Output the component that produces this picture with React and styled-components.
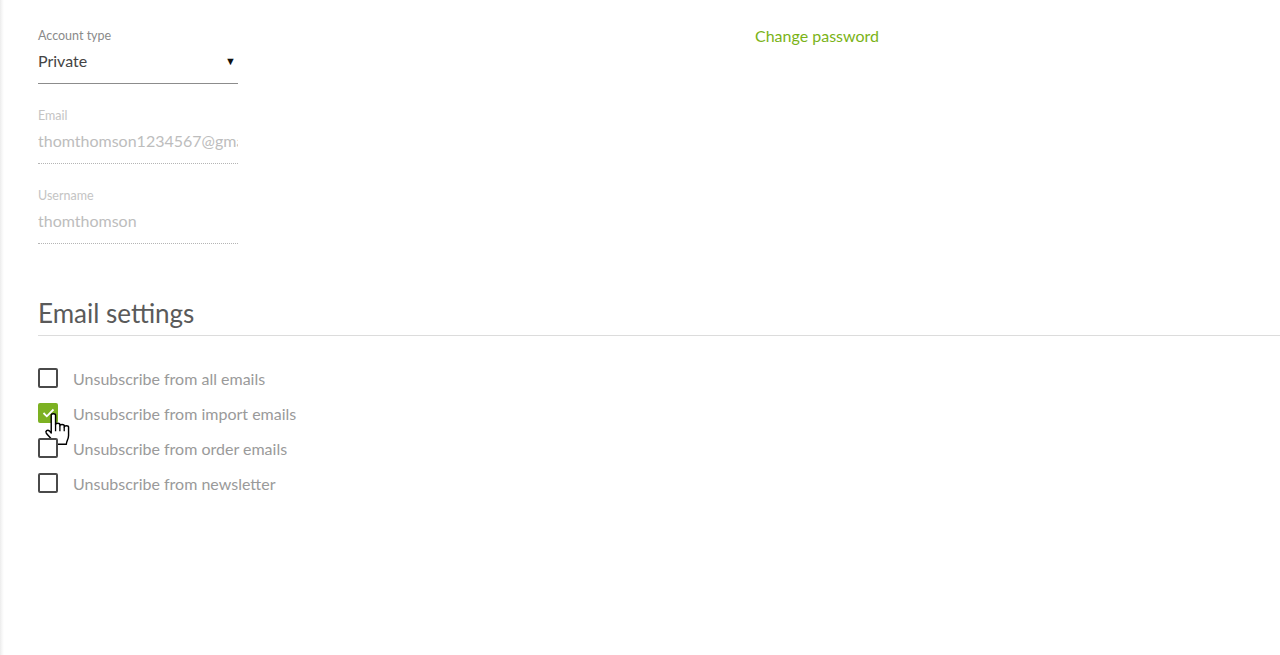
import React, { useState } from "react";
import styled, { createGlobalStyle } from "styled-components";

const GlobalStyle = createGlobalStyle`
  html, body {
    margin: 0;
    padding: 0;
    background: #fff;
  }
  body {
    font-family: Lato, "Noto Sans", sans-serif;
  }
`;

const Page = styled.div`
  min-height: 100vh;
  box-sizing: border-box;
  padding: 28px 0 0 38px;
  background: linear-gradient(to right, #ececec 0, #f7f7f7 2px, #fff 4px);
`;

const TopGrid = styled.div`
  display: grid;
  grid-template-columns: 717px 1fr;
`;

const Fields = styled.div`
  display: flex;
  flex-direction: column;
  gap: 24px;
  width: 200px;
`;

const Field = styled.div`
  display: flex;
  flex-direction: column;
`;

const Label = styled.label`
  font-size: 12.5px;
  line-height: 16px;
  color: ${(p) => (p.muted ? "#c4c4c4" : "#8a8a8a")};
`;

const Select = styled.div`
  position: relative;
  font-size: 16px;
  line-height: 20px;
  padding: 7px 0 12px;
  color: #444;
  border-bottom: 1px solid #8c8c8c;
`;

const Input = styled.input`
  box-sizing: content-box;
  width: 200px;
  margin: 0;
  padding: 7px 0 12px;
  border: 0;
  border-bottom: 1px dotted #b5b5b5;
  outline: none;
  background: transparent;
  font-family: inherit;
  font-size: 16px;
  line-height: 20px;
  height: 20px;
  color: #bdbdbd;
  -webkit-text-fill-color: #bdbdbd;
`;

const Caret = styled.span`
  position: absolute;
  right: 2px;
  top: 7px;
  font-size: 11px;
  color: #111;
`;

const LinkText = styled.a`
  display: block;
  margin-top: -1px;
  font-size: 16px;
  line-height: 18px;
  color: #7ab317;
  text-decoration: none;
  cursor: pointer;
`;

const Section = styled.section`
  margin-top: 53px;
`;

const Heading = styled.h2`
  margin: 0;
  padding-bottom: 6px;
  font-size: 26px;
  font-weight: 400;
  line-height: 32px;
  color: #5a5a5a;
  border-bottom: 1px solid #dcdcdc;
`;

const CheckList = styled.div`
  display: flex;
  flex-direction: column;
  gap: 15px;
  margin-top: 32px;
`;

const Row = styled.label`
  position: relative;
  display: flex;
  align-items: center;
  gap: 15px;
  height: 20px;
  cursor: pointer;
`;

const Box = styled.span`
  box-sizing: border-box;
  width: 20px;
  height: 20px;
  border-radius: 2px;
  display: flex;
  align-items: center;
  justify-content: center;
  border: 2px solid ${(p) => (p.checked ? "#7cb122" : "#4a4a4a")};
  background: ${(p) => (p.checked ? "#7cb122" : "#fff")};
`;

const RowText = styled.span`
  font-size: 16px;
  color: #9a9a9a;
`;

const Pointer = styled.svg`
  position: absolute;
  left: 6px;
  top: 9px;
  pointer-events: none;
`;

function HandCursor() {
  return (
    <Pointer width="26" height="34" viewBox="0 0 18 23">
      <path
        d="M5 2 C5 0.6 8 0.6 8 2 V8.5 C8 7.2 11 7.2 11 8.5 V9.3 C11 8 14 8 14 9.3 V10.2 C14 9 17 9 17 10.2 V16 C17 18.5 15.5 20 15.5 22 H7.2 C7 20 3.6 17 1.6 14.4 C0.7 13 2.4 11.6 3.7 12.8 L5 14.2 Z"
        fill="#fff"
        stroke="#000"
        strokeWidth="1"
        strokeLinejoin="round"
      />
      <path d="M8 8.5 V13 M11 9.3 V13 M14 10.2 V13" stroke="#000" strokeWidth="0.9" />
    </Pointer>
  );
}

const options = [
  { id: "all", text: "Unsubscribe from all emails" },
  { id: "import", text: "Unsubscribe from import emails" },
  { id: "order", text: "Unsubscribe from order emails" },
  { id: "news", text: "Unsubscribe from newsletter" },
];

export default function App() {
  const [checked, setChecked] = useState({ import: true });

  const toggle = (id) => setChecked((c) => ({ ...c, [id]: !c[id] }));

  return (
    <>
      <GlobalStyle />
      <Page>
        <TopGrid>
          <Fields>
            <Field>
              <Label>Account type</Label>
              <Select>
                Private
                <Caret>▼</Caret>
              </Select>
            </Field>
            <Field>
              <Label muted>Email</Label>
              <Input readOnly value="thomthomson1234567@gmail.com" />
            </Field>
            <Field>
              <Label muted>Username</Label>
              <Input readOnly value="thomthomson" />
            </Field>
          </Fields>
          <div>
            <LinkText>Change password</LinkText>
          </div>
        </TopGrid>

        <Section>
          <Heading>Email settings</Heading>
          <CheckList>
            {options.map((o) => (
              <Row key={o.id} onClick={() => toggle(o.id)}>
                <Box checked={!!checked[o.id]}>
                  {checked[o.id] && (
                    <svg width="13" height="10" viewBox="0 0 13 10">
                      <path d="M1.5 5 L4.8 8.3 L11.5 1.5" fill="none" stroke="#fff" strokeWidth="1.8" />
                    </svg>
                  )}
                </Box>
                <RowText>{o.text}</RowText>
                {o.id === "import" && <HandCursor />}
              </Row>
            ))}
          </CheckList>
        </Section>
      </Page>
    </>
  );
}
